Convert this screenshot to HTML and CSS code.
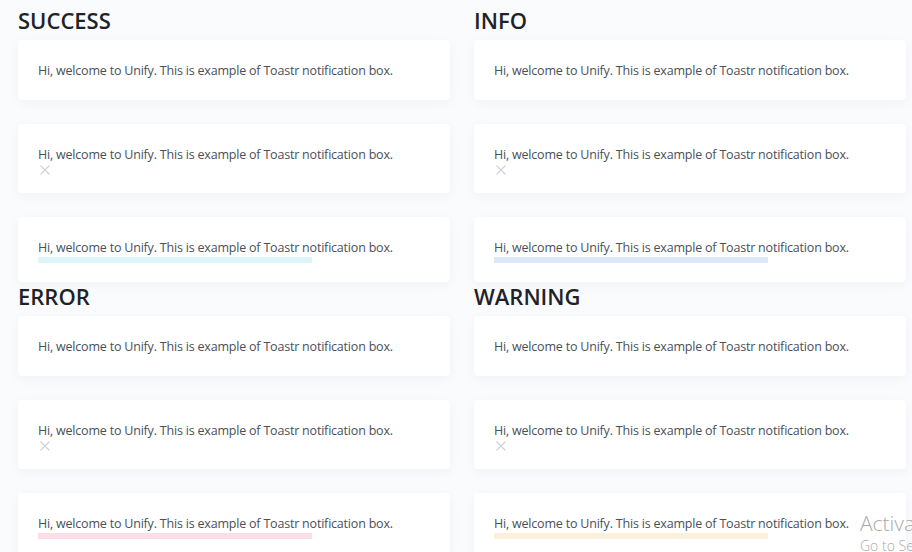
FILE: index.html
```html
<!DOCTYPE html>
<html>
<head>
<meta charset="utf-8">
<link rel="stylesheet" href="styles.css">
</head>
<body>
<div class="page">
  <section class="group">
    <h2 class="title">SUCCESS</h2>
    <div class="toast"><p class="msg">Hi, welcome to Unify. This is example of Toastr notification box.</p></div>
    <div class="toast"><p class="msg">Hi, welcome to Unify. This is example of Toastr notification box.</p>
      <svg class="close" width="10" height="10" viewBox="0 0 10 10"><path d="M0.5 0.5L9.5 9.5M9.5 0.5L0.5 9.5" stroke="#cfd2d6" stroke-width="1.1" fill="none"/></svg></div>
    <div class="toast"><p class="msg">Hi, welcome to Unify. This is example of Toastr notification box.</p><div class="bar bar-success"></div></div>
  </section>
  <section class="group">
    <h2 class="title">INFO</h2>
    <div class="toast"><p class="msg">Hi, welcome to Unify. This is example of Toastr notification box.</p></div>
    <div class="toast"><p class="msg">Hi, welcome to Unify. This is example of Toastr notification box.</p>
      <svg class="close" width="10" height="10" viewBox="0 0 10 10"><path d="M0.5 0.5L9.5 9.5M9.5 0.5L0.5 9.5" stroke="#cfd2d6" stroke-width="1.1" fill="none"/></svg></div>
    <div class="toast"><p class="msg">Hi, welcome to Unify. This is example of Toastr notification box.</p><div class="bar bar-info"></div></div>
  </section>
  <section class="group">
    <h2 class="title">ERROR</h2>
    <div class="toast"><p class="msg">Hi, welcome to Unify. This is example of Toastr notification box.</p></div>
    <div class="toast"><p class="msg">Hi, welcome to Unify. This is example of Toastr notification box.</p>
      <svg class="close" width="10" height="10" viewBox="0 0 10 10"><path d="M0.5 0.5L9.5 9.5M9.5 0.5L0.5 9.5" stroke="#cfd2d6" stroke-width="1.1" fill="none"/></svg></div>
    <div class="toast"><p class="msg">Hi, welcome to Unify. This is example of Toastr notification box.</p><div class="bar bar-error"></div></div>
  </section>
  <section class="group">
    <h2 class="title">WARNING</h2>
    <div class="toast"><p class="msg">Hi, welcome to Unify. This is example of Toastr notification box.</p></div>
    <div class="toast"><p class="msg">Hi, welcome to Unify. This is example of Toastr notification box.</p>
      <svg class="close" width="10" height="10" viewBox="0 0 10 10"><path d="M0.5 0.5L9.5 9.5M9.5 0.5L0.5 9.5" stroke="#cfd2d6" stroke-width="1.1" fill="none"/></svg></div>
    <div class="toast"><p class="msg">Hi, welcome to Unify. This is example of Toastr notification box.</p><div class="bar bar-warning"></div></div>
  </section>
</div>
<div class="watermark">
  <div class="wm-title">Activate Windows</div>
  <div class="wm-sub">Go to Settings to activate Windows.</div>
</div>
</body>
</html>
```
FILE: styles.css
```css
html, body {
  margin: 0;
  padding: 0;
  background: #fafbfd;
  overflow: hidden;
}
body {
  font-family: "Open Sans", "Noto Sans", sans-serif;
  color: #495057;
  width: 912px;
  height: 552px;
}
.page {
  display: grid;
  grid-template-columns: 432px 432px;
  column-gap: 24px;
  row-gap: 1px;
  padding: 7px 0 0 18px;
}
.group {
  display: flex;
  flex-direction: column;
  gap: 24px;
}
.title {
  margin: 0 0 -17px 0;
  font-size: 22px;
  line-height: 26px;
  font-weight: 600;
  color: #1f2328;
}
.toast {
  background: #fff;
  border-radius: 4px;
  box-shadow: 0 3px 12px rgba(30, 40, 80, 0.045);
  padding: 21px 20px 19px;
  display: flex;
  flex-direction: column;
  align-items: flex-start;
}
.msg {
  margin: 0;
  font-size: 12.5px;
  letter-spacing: -0.2px;
  line-height: 20px;
  color: #4a5059;
}
.close {
  display: block;
  margin: 0 0 -1px 2px;
}
.bar {
  width: 274px;
  height: 6px;
  margin-top: -1px;
}
.bar-success { background: #ddf6f9; }
.bar-info { background: #dce7fa; }
.bar-error { background: #fcdfe6; }
.bar-warning { background: #fcefdc; }
.watermark {
  position: absolute;
  left: 860px;
  top: 509px;
  white-space: nowrap;
  color: #a9a9a9;
  font-family: "Open Sans", "Noto Sans", sans-serif;
  font-weight: 300;
}
.wm-title {
  font-size: 21px;
  line-height: 28px;
}
.wm-sub {
  font-size: 14px;
  line-height: 18px;
}
```
